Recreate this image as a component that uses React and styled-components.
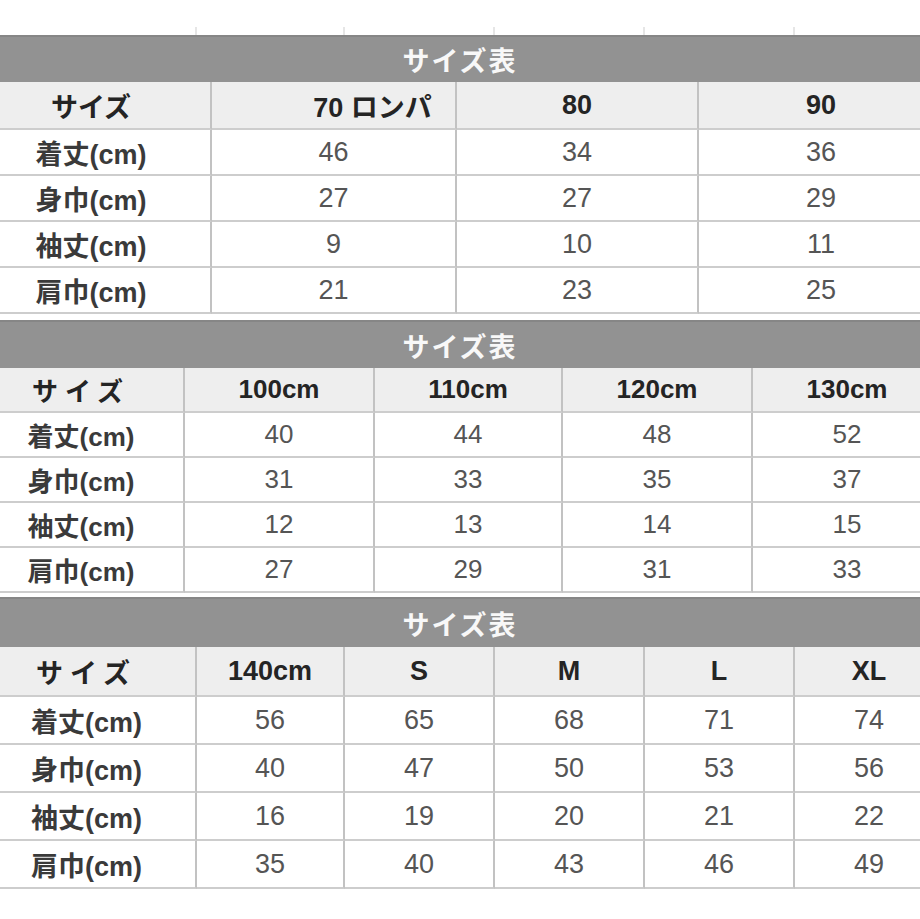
import styled, { createGlobalStyle } from 'styled-components'

const GlobalStyle = createGlobalStyle`
  html, body {
    margin: 0;
    padding: 0;
    background: #ffffff;
  }
  body {
    font-family: "Liberation Sans", "Noto Sans CJK JP", sans-serif;
  }
`

const LABELS = ['着丈(cm)', '身巾(cm)', '袖丈(cm)', '肩巾(cm)']

const TABLES = [
  {
    offset: -28,
    cols: [240, 245, 242, 246],
    titleH: 47,
    headH: 48,
    rowH: 46,
    gap: 6,
    font: 27,
    sizeSpacing: 0,
    heads: [{ text: '70 ロンパ', shift: 78 }, { text: '80' }, { text: '90' }],
    rows: [
      ['46', '34', '36'],
      ['27', '27', '29'],
      ['9', '10', '11'],
      ['21', '23', '25'],
    ],
  },
  {
    offset: -21,
    cols: [206, 190, 188, 190, 190],
    titleH: 48,
    headH: 45,
    rowH: 45,
    gap: 4,
    font: 26,
    sizeSpacing: 7,
    heads: [{ text: '100cm' }, { text: '110cm' }, { text: '120cm' }, { text: '130cm' }],
    rows: [
      ['40', '44', '48', '52'],
      ['31', '33', '35', '37'],
      ['12', '13', '14', '15'],
      ['27', '29', '31', '33'],
    ],
  },
  {
    offset: -22,
    cols: [219, 148, 150, 150, 150, 150],
    titleH: 50,
    headH: 50,
    rowH: 48,
    gap: 0,
    font: 27,
    sizeSpacing: 7,
    heads: [{ text: '140cm' }, { text: 'S' }, { text: 'M' }, { text: 'L' }, { text: 'XL' }],
    rows: [
      ['56', '65', '68', '71', '74'],
      ['40', '47', '50', '53', '56'],
      ['16', '19', '20', '21', '22'],
      ['35', '40', '43', '46', '49'],
    ],
  },
]

const Page = styled.div`
  width: 920px;
  height: 919px;
  overflow: hidden;
  display: flex;
  flex-direction: column;
`

const TopStrip = styled.div`
  height: 35px;
  display: grid;
  grid-template-columns: ${(p) => p.$cols};
  align-items: end;
  margin-left: ${(p) => p.$offset}px;
  width: max-content;
`

const Tick = styled.div`
  height: 8px;
  border-right: 2px solid #e6e6e6;
`

const Section = styled.section`
  display: flex;
  flex-direction: column;
  margin-bottom: ${(p) => p.$gap}px;
`

const TitleBar = styled.div`
  height: ${(p) => p.$h}px;
  box-sizing: border-box;
  background: #929292;
  border-top: 2px solid #868686;
  display: flex;
  align-items: center;
  justify-content: center;
  color: #f8f8f8;
  font-family: "Noto Sans CJK JP", sans-serif;
  font-weight: 700;
  font-size: 27px;
  letter-spacing: 2px;
`

const Grid = styled.div`
  display: grid;
  grid-template-columns: ${(p) => p.$cols};
  grid-template-rows: ${(p) => p.$head}px repeat(4, ${(p) => p.$row}px);
  margin-left: ${(p) => p.$offset}px;
  width: max-content;
  font-size: ${(p) => p.$font}px;
`

const Cell = styled.div`
  box-sizing: border-box;
  display: flex;
  align-items: center;
  justify-content: center;
  border-right: 2px solid #c2c2c2;
  border-bottom: 2px solid #cdcdcd;
  background: ${(p) => (p.$head ? '#eeeeee' : '#ffffff')};
  color: ${(p) => (p.$head ? '#242424' : p.$label ? '#3a3a3a' : '#555555')};
  font-weight: ${(p) => (p.$head || p.$label ? 700 : 400)};
  padding-left: ${(p) => p.$shift || 0}px;
  letter-spacing: ${(p) => p.$spacing || 0}px;
  white-space: nowrap;
`

function SizeTable({ t }) {
  const cols = t.cols.map((c) => `${c}px`).join(' ')
  return (
    <Section $gap={t.gap}>
      <TitleBar $h={t.titleH}>サイズ表</TitleBar>
      <Grid $cols={cols} $head={t.headH} $row={t.rowH} $offset={t.offset} $font={t.font}>
        <Cell $head $spacing={t.sizeSpacing}>サイズ</Cell>
        {t.heads.map((h) => (
          <Cell key={h.text} $head $shift={h.shift}>
            {h.text}
          </Cell>
        ))}
        {t.rows.map((row, i) => [
          <Cell key={`l${i}`} $label>
            {LABELS[i]}
          </Cell>,
          ...row.map((v, j) => <Cell key={`${i}-${j}`}>{v}</Cell>),
        ])}
      </Grid>
    </Section>
  )
}

export default function App() {
  const last = TABLES[2]
  return (
    <>
      <GlobalStyle />
      <Page>
        <TopStrip $cols={last.cols.map((c) => `${c}px`).join(' ')} $offset={last.offset}>
          {last.cols.map((c, i) => (
            <Tick key={i} />
          ))}
        </TopStrip>
        {TABLES.map((t, i) => (
          <SizeTable key={i} t={t} />
        ))}
      </Page>
    </>
  )
}
